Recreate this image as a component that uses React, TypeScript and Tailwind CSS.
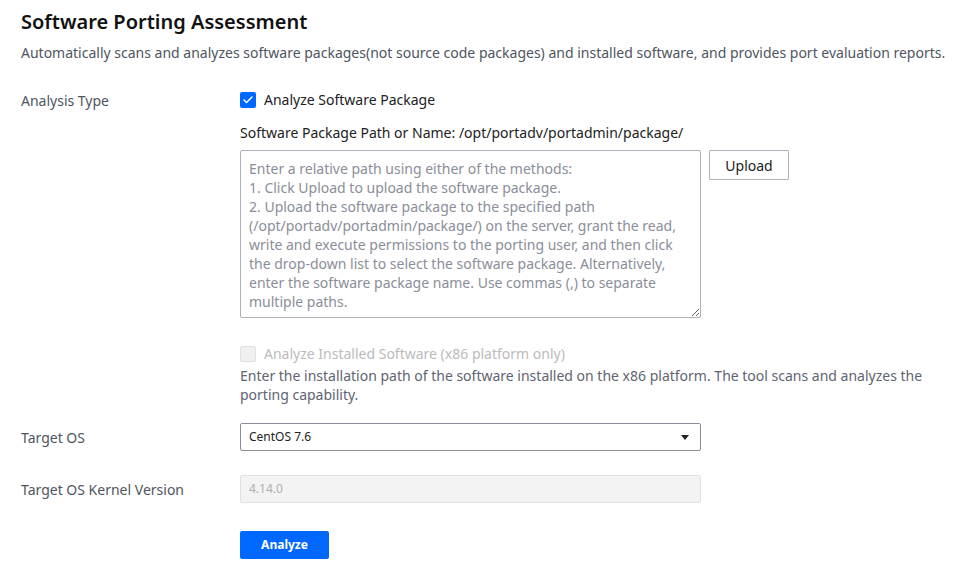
import { Check } from 'lucide-react'

const font = { fontFamily: '"Noto Sans", "Open Sans", Arial, sans-serif' }

function Row({ label, children, className = '' }: { label: string; children: React.ReactNode; className?: string }) {
  return (
    <div className={`flex ${className}`}>
      <div className="w-[219px] shrink-0 text-[14px] text-[#4e5561]">{label}</div>
      <div className="flex-1">{children}</div>
    </div>
  )
}

export default function App() {
  return (
    <div className="min-h-screen w-[978px] bg-white pl-[21px] pt-[8px]" style={font}>
      <h1 className="text-[20px] font-semibold leading-[28px] text-[#111]">Software Porting Assessment</h1>
      <p className="mt-[7px] text-[14px] leading-[20px] text-[#4e5561]">
        Automatically scans and analyzes software packages(not source code packages) and installed software, and provides port evaluation reports.
      </p>

      <div className="mt-[26px]">
        <div className="flex">
          <div className="w-[219px] shrink-0 pt-[1px] text-[14px] text-[#4e5561]">Analysis Type</div>
          <div className="flex-1">
            <label className="flex items-center gap-[8px]">
              <span className="flex h-[16px] w-[16px] items-center justify-center rounded-[2px] bg-[#0067ff]">
                <Check className="h-[12px] w-[12px] text-white" strokeWidth={3} />
              </span>
              <span className="text-[14px] text-[#222]">Analyze Software Package</span>
            </label>
            <div className="mt-[13px] text-[14px] leading-[20px] text-[#222]">
              Software Package Path or Name: /opt/portadv/portadmin/package/
            </div>
            <div className="mt-[7px] flex items-start gap-[8px]">
              <textarea
                className="h-[168px] w-[461px] resize-y rounded-[2px] border border-[#adb0b8] px-[8px] py-[8px] text-[14px] leading-[19px] text-[#888] outline-none placeholder:text-[#8a8e99]"
                style={font}
                placeholder={
                  'Enter a relative path using either of the methods:\n1. Click Upload to upload the software package.\n2. Upload the software package to the specified path (/opt/portadv/portadmin/package/) on the server, grant the read, write and execute permissions to the porting user, and then click the drop-down list to select the software package. Alternatively, enter the software package name. Use commas (,) to separate multiple paths.'
                }
              />
              <button className="h-[30px] w-[80px] rounded-[1px] border border-[#adb0b8] bg-white text-[14px] text-[#222]">
                Upload
              </button>
            </div>

            <label className="mt-[25px] flex items-center gap-[8px]">
              <span className="h-[16px] w-[16px] rounded-[2px] border border-[#dfe1e6] bg-[#f0f0f0]" />
              <span className="text-[14px] text-[#bbbbbb]">Analyze Installed Software (x86 platform only)</span>
            </label>
            <p className="mt-[2px] pr-[20px] text-[14px] leading-[19px] text-[#5e6470]">
              Enter the installation path of the software installed on the x86 platform. The tool scans and analyzes the porting capability.
            </p>
          </div>
        </div>

        <Row label="Target OS" className="mt-[19px] items-center">
          <div className="flex h-[28px] w-[461px] items-center justify-between rounded-[2px] border border-[#8a8e99] px-[8px]">
            <span className="text-[12px] text-[#222]">CentOS 7.6</span>
            <svg width="8" height="5" viewBox="0 0 8 5" className="mr-[3px]">
              <path d="M0 0h8L4 5z" fill="#222" />
            </svg>
          </div>
        </Row>

        <Row label="Target OS Kernel Version" className="mt-[24px] items-center">
          <div className="flex h-[28px] w-[461px] items-center rounded-[2px] border border-[#dfe1e6] bg-[#f3f3f3] px-[8px]">
            <span className="text-[12px] text-[#b0b0b0]">4.14.0</span>
          </div>
        </Row>

        <div className="mt-[28px] pl-[219px]">
          <button className="h-[28px] w-[89px] rounded-[2px] bg-[#0067ff] text-[12px] font-bold text-white">Analyze</button>
        </div>
      </div>
    </div>
  )
}
